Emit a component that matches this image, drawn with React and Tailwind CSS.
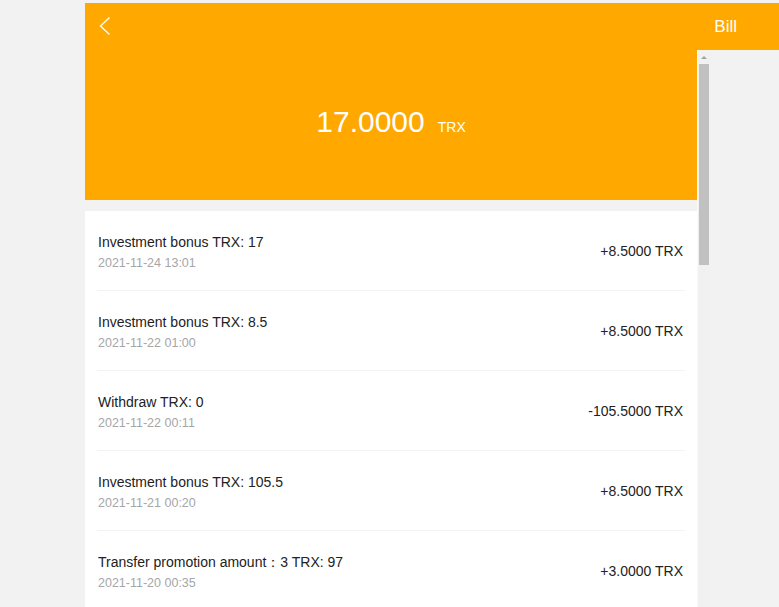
import React from "react";

const bills = [
  { title: "Investment bonus TRX: 17", time: "2021-11-24 13:01", amount: "+8.5000 TRX" },
  { title: "Investment bonus TRX: 8.5", time: "2021-11-22 01:00", amount: "+8.5000 TRX" },
  { title: "Withdraw TRX: 0", time: "2021-11-22 00:11", amount: "-105.5000 TRX" },
  { title: "Investment bonus TRX: 105.5", time: "2021-11-21 00:20", amount: "+8.5000 TRX" },
  { title: "Transfer promotion amount\uFF1A3 TRX: 97", time: "2021-11-20 00:35", amount: "+3.0000 TRX" },
];

// Bill row
const BillRow = ({ title, time, amount }) => (
  <div className="mx-[12px] h-[80px] flex items-center justify-between border-b border-[#f3f3f3]">
    <div className="flex flex-col pt-[3px] pl-[1px]">
      <p className="text-[14px] leading-[16px] text-[#222]">{title}</p>
      <p className="mt-[5px] text-[12.5px] leading-[16px] text-[#a6a6a6]">{time}</p>
    </div>
    <p className="text-[14px] leading-[16px] text-[#222] pr-[2px]">{amount}</p>
  </div>
);

export default function App() {
  return (
    <div
      className="w-[779px] h-[607px] overflow-hidden bg-[#f2f2f2] pt-[3px] flex flex-col"
      style={{ fontFamily: '"Liberation Sans", Arial, sans-serif' }}
    >
      {/* Top bar */}
      <div className="ml-[85px] h-[47px] shrink-0 bg-[#ffa800] flex items-center justify-between pl-[13px] pr-[42px]">
        <svg width="14" height="20" viewBox="0 0 14 20" className="-mt-[1px]">
          <path d="M11.5 1.5 L2.5 10 L11.5 18.5" fill="none" stroke="#fff" strokeWidth="1.4" />
        </svg>
        <span className="text-[17px] text-white">Bill</span>
      </div>

      <div className="ml-[85px] flex flex-1 min-h-0">
        {/* Content column */}
        <div className="w-[612px] flex flex-col">
          <div className="h-[150px] shrink-0 bg-[#ffa800] flex items-center justify-center">
            <div className="flex items-baseline text-white -mt-[7px]">
              <span className="text-[30px]">17.0000</span>
              <span className="ml-[13px] text-[14px]">TRX</span>
            </div>
          </div>
          <div className="mt-[11px] bg-white flex-1">
            {bills.map((b, i) => (
              <BillRow key={i} {...b} />
            ))}
          </div>
        </div>

        {/* Scrollbar */}
        <div className="w-[13px] bg-[#f1f1f1] border-l border-[#fafafa] flex flex-col items-center">
          <div className="mt-[6px] w-0 h-0 border-l-[3px] border-r-[3px] border-b-[3px] border-l-transparent border-r-transparent border-b-[#a3a3a3]" />
          <div className="mt-[5px] w-[10px] h-[201px] bg-[#c1c1c1]" />
        </div>
      </div>
    </div>
  );
}
